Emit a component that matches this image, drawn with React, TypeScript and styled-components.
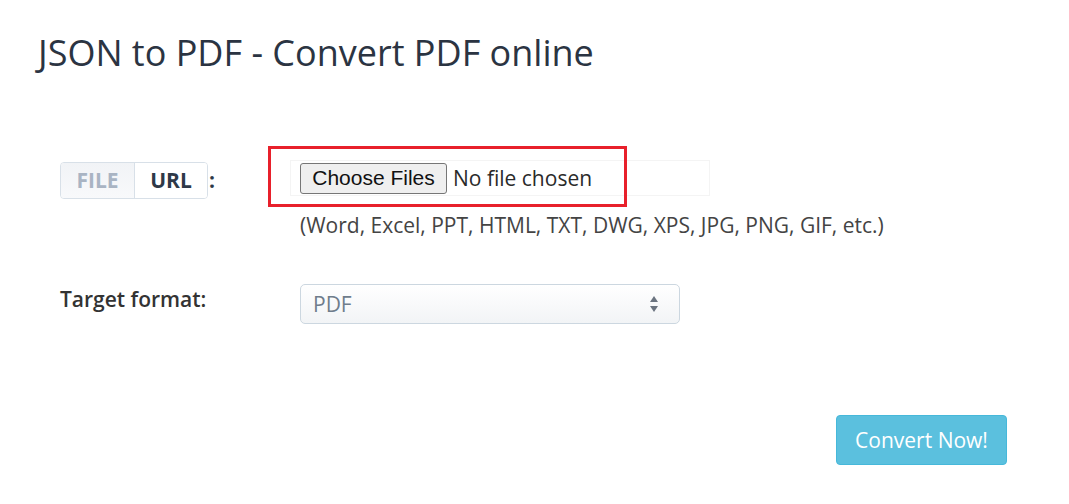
import React from 'react';
import styled, { createGlobalStyle } from 'styled-components';

const GlobalStyle = createGlobalStyle`
  html, body {
    margin: 0;
    padding: 0;
    background: #ffffff;
  }
  body {
    font-family: 'Open Sans', 'Liberation Sans', sans-serif;
    color: #333333;
  }
`;

const Page = styled.div`
  width: 1069px;
  height: 504px;
  box-sizing: border-box;
  padding: 28px 0 0 38px;
  overflow: hidden;
`;

const Title = styled.h1`
  margin: 0;
  font-size: 36px;
  font-weight: 400;
  line-height: 50px;
  color: #2b3442;
`;

const Form = styled.div`
  margin-top: 82px;
  padding-left: 22px;
  display: flex;
  flex-direction: column;
`;

const Row = styled.div<{ gap?: number }>`
  display: flex;
  align-items: flex-start;
  margin-top: ${(p) => p.gap ?? 0}px;
`;

const LabelCol = styled.div`
  width: 230px;
  flex: none;
  display: flex;
  align-items: center;
  min-height: 39px;
`;

const FieldCol = styled.div`
  display: flex;
  flex-direction: column;
  position: relative;
`;

const Toggle = styled.div`
  display: flex;
  height: 37px;
  margin-top: 1px;
  border: 1px solid #d8e0e8;
  border-radius: 4px;
  box-sizing: border-box;
  overflow: hidden;
`;

const ToggleItem = styled.div<{ active?: boolean }>`
  display: flex;
  align-items: center;
  justify-content: center;
  width: ${(p) => (p.active ? '73px' : '72px')};
  font-size: 21px;
  font-weight: 700;
  color: ${(p) => (p.active ? '#a9b4c3' : '#2e3948')};
  background: ${(p) => (p.active ? 'linear-gradient(#f1f3f6, #f8f9fb)' : '#ffffff')};
  border-right: ${(p) => (p.active ? '1px solid #d8e0e8' : 'none')};
`;

const Colon = styled.span`
  margin-left: 1px;
  font-size: 21px;
  font-weight: 700;
  color: #2e3948;
  line-height: 34px;
`;

const FileBox = styled.div`
  width: 420px;
  height: 36px;
  box-sizing: border-box;
  border: 1px solid #f4f4f4;
  display: flex;
  align-items: center;
  padding-left: 9px;
`;

const ChooseButton = styled.button`
  height: 31px;
  width: 147px;
  padding: 0;
  font-family: 'Liberation Sans', Arial, sans-serif;
  font-size: 21px;
  color: #111111;
  background: #efefef;
  border: 1px solid #767676;
  border-radius: 3px;
`;

const NoFile = styled.span`
  margin-left: 6px;
  font-size: 21px;
  color: #2a2a2a;
`;

const Annotation = styled.div`
  position: absolute;
  left: -22px;
  top: -14px;
  width: 359px;
  height: 61px;
  box-sizing: border-box;
  border: 3px solid #e8202b;
`;

const Hint = styled.div`
  margin: 15px 0 0 10px;
  font-size: 21px;
  line-height: 28px;
  color: #444444;
`;

const FormatLabel = styled.div`
  font-size: 21px;
  font-weight: 600;
  color: #333333;
  padding-bottom: 10px;
`;

const Select = styled.div`
  margin-left: 10px;
  width: 380px;
  height: 40px;
  box-sizing: border-box;
  border: 1px solid #ccd7e0;
  border-radius: 5px;
  background: linear-gradient(#ffffff, #f2f4f6);
  display: flex;
  align-items: center;
  justify-content: space-between;
  padding: 0 20px 0 12px;
  font-size: 21px;
  color: #6f7d8c;
`;

const Footer = styled.div`
  display: flex;
  justify-content: flex-end;
  padding-right: 62px;
  margin-top: 91px;
`;

const ConvertButton = styled.button`
  width: 171px;
  height: 50px;
  font-family: 'Open Sans', 'Liberation Sans', sans-serif;
  font-size: 21px;
  color: #ffffff;
  background: #5bc0de;
  border: 1px solid #46b8da;
  border-radius: 4px;
`;

const Arrows = () => (
  <svg width="10" height="18" viewBox="0 0 10 18">
    <path d="M5 1 L9 7 H1 Z" fill="#6b7480" />
    <path d="M5 17 L9 11 H1 Z" fill="#6b7480" />
  </svg>
);

export default function App() {
  return (
    <>
      <GlobalStyle />
      <Page>
        <Title>JSON to PDF - Convert PDF online</Title>
        <Form>
          <Row>
            <LabelCol>
              <Toggle>
                <ToggleItem active>FILE</ToggleItem>
                <ToggleItem>URL</ToggleItem>
              </Toggle>
              <Colon>:</Colon>
            </LabelCol>
            <FieldCol>
              <FileBox>
                <ChooseButton>Choose Files</ChooseButton>
                <NoFile>No file chosen</NoFile>
              </FileBox>
              <Annotation />
              <Hint>(Word, Excel, PPT, HTML, TXT, DWG, XPS, JPG, PNG, GIF, etc.)</Hint>
            </FieldCol>
          </Row>
          <Row gap={45}>
            <LabelCol>
              <FormatLabel>Target format:</FormatLabel>
            </LabelCol>
            <Select>
              <span>PDF</span>
              <Arrows />
            </Select>
          </Row>
        </Form>
        <Footer>
          <ConvertButton>Convert Now!</ConvertButton>
        </Footer>
      </Page>
    </>
  );
}
